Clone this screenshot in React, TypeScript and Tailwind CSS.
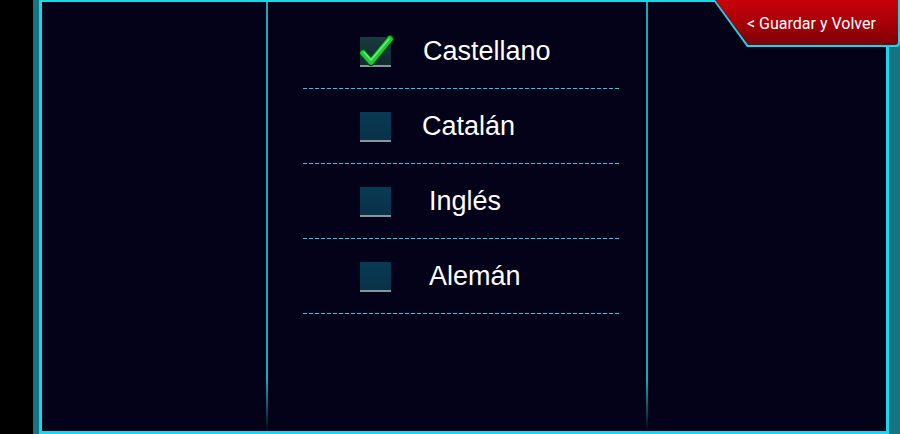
import React from "react";

const rows = [
  { label: "Castellano", checked: true, ml: "ml-[32px]" },
  { label: "Catalán", checked: false, ml: "ml-[31px]" },
  { label: "Inglés", checked: false, ml: "ml-[38px]" },
  { label: "Alemán", checked: false, ml: "ml-[38px]" },
];

function CheckBox({ checked }: { checked: boolean }) {
  return (
    <div className="relative w-[31px] h-[30px] shrink-0 mt-[2px]">
      <div
        className={
          "w-full h-full border-b-2 border-[#8a9499] " +
          (checked
            ? "bg-[linear-gradient(180deg,#1b3a40,#0e2a30)]"
            : "bg-[linear-gradient(180deg,#093a55,#083248)]")
        }
      />
      {checked && (
        <svg
          className="absolute left-[0px] top-[-3px]"
          width="34"
          height="34"
          viewBox="0 0 34 34"
        >
          <path
            d="M3 19 L11 28 L30 5"
            fill="none"
            stroke="#064a12"
            strokeWidth="8"
            strokeLinecap="round"
            strokeLinejoin="round"
          />
          <path
            d="M3 19 L11 28 L30 5"
            fill="none"
            stroke="#22c83c"
            strokeWidth="5.5"
            strokeLinecap="round"
            strokeLinejoin="round"
          />
          <path
            d="M4 18 L11 26 L29 5"
            fill="none"
            stroke="#6cf07a"
            strokeWidth="1.4"
            strokeLinecap="round"
            strokeLinejoin="round"
          />
        </svg>
      )}
    </div>
  );
}

function Divider() {
  return (
    <div className="w-[2px] h-full bg-[linear-gradient(180deg,#1aa8ba_0%,#1aa8ba_88%,#0a4050_96%,transparent_100%)]" />
  );
}

export default function App() {
  return (
    <div className="relative w-[900px] h-[434px] bg-black overflow-hidden flex font-['Liberation_Sans',Arial,sans-serif]">
      <div className="w-[33px] h-full bg-black" />
      <div className="w-[6px] h-full bg-[#177582]" />
      <div className="flex-1 h-full flex border-l-[3px] border-t-2 border-b-[3px] border-r-[3px] border-[#1bd6ea] bg-[#030219]">
        <div className="w-[224px] h-full" />
        <Divider />
        <div className="w-[378px] h-full pt-[12px] flex flex-col">
          {rows.map((r) => (
            <div key={r.label} className="flex flex-col">
              <div className="h-[74px] flex items-center pl-[92px]">
                <CheckBox checked={r.checked} />
                <span className={"text-[27px] text-white leading-none " + r.ml}>
                  {r.label}
                </span>
              </div>
              <div className="ml-[35px] w-[316px] h-[1px] bg-[repeating-linear-gradient(90deg,#22cce6_0px,#22cce6_4px,transparent_4px,transparent_6px)]" />
            </div>
          ))}
        </div>
        <Divider />
        <div className="flex-1 h-full" />
      </div>
      <div className="w-[11px] h-full bg-[#177582]" />

      <div className="absolute left-[713px] top-0 w-[187px] h-[47px] bg-[#1bd6ea] [clip-path:polygon(0_0,100%_0,100%_100%,34px_100%)] rounded-br-[4px]">
        <div className="absolute left-[2px] top-0 right-[2px] bottom-[2px] bg-[linear-gradient(180deg,#c8000a_0%,#a50008_55%,#7a0008_100%)] [clip-path:polygon(0_0,100%_0,100%_100%,33px_100%)] rounded-br-[3px] flex items-center justify-start pl-[32px] pt-[2px]">
          <span className="text-white text-[16px] leading-none font-['Roboto','Liberation_Sans',sans-serif] whitespace-nowrap">
            &lt; Guardar y Volver
          </span>
        </div>
      </div>
    </div>
  );
}
